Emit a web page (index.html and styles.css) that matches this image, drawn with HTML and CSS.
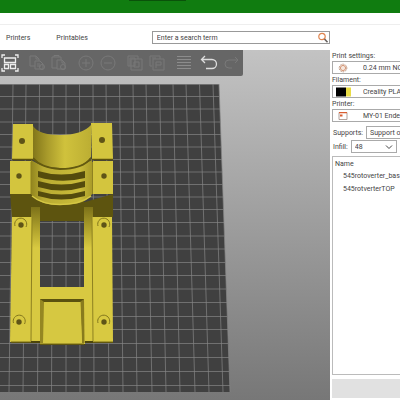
FILE: index.html
```html
<!DOCTYPE html>
<html lang="en">
<head>
    <meta charset="UTF-8">
    <meta name="viewport" content="width=device-width, initial-scale=1.0">
    <title>Slicer</title>
    <link rel="stylesheet" href="styles.css">
</head>
<body>

    <div class="title-bar"><span class="title-tab"></span></div>
    <div class="menu-strip"></div>

    <header class="top-nav">
        <nav class="nav-links">
            <a href="#printers">Printers</a>
            <a href="#printables">Printables</a>
        </nav>
        <form class="search">
            <input type="text" placeholder="Enter a search term" aria-label="Search">
            <button type="button" class="search-btn" aria-label="Search">
                <svg viewBox="0 0 12 12"><circle cx="5" cy="4.5" r="3.2" fill="none" stroke="#e08550" stroke-width="1.2"/><path d="M7.5 7l3 3.2" stroke="#665f5c" stroke-width="1.6"/></svg>
            </button>
        </form>
    </header>

    <main class="workspace">
        <section class="viewport">
            <svg class="scene" viewBox="0 50 330 350" preserveAspectRatio="xMinYMin slice">
                <defs>
                    <linearGradient id="arch" x1="0" x2="1" y1="0" y2="0">
                        <stop offset="0" stop-color="#82761a"/>
                        <stop offset=".25" stop-color="#a99b2b"/>
                        <stop offset=".55" stop-color="#d0c23c"/>
                        <stop offset="1" stop-color="#bcae33"/>
                    </linearGradient>
                    <linearGradient id="band" x1="0" x2="1" y1="0" y2="0">
                        <stop offset="0" stop-color="#92851e"/>
                        <stop offset=".2" stop-color="#b9ab32"/>
                        <stop offset=".8" stop-color="#cabc3a"/>
                        <stop offset="1" stop-color="#a99b29"/>
                    </linearGradient>
                    <linearGradient id="rail" x1="0" x2="0" y1="0" y2="1">
                        <stop offset="0" stop-color="#7c7119"/>
                        <stop offset=".18" stop-color="#b5a72f"/>
                        <stop offset=".3" stop-color="#d8c941"/>
                        <stop offset="1" stop-color="#d8c941"/>
                    </linearGradient>
                </defs>

                <!-- print bed -->
                <path d="M0 84H219L230 392H0z" fill="#404040"/>
                <g fill="none" stroke="#858585" stroke-width=".7">
                    <path d="M13 84L9 392M26 84L23 392M39.500 84L37.500 392M53 84L51.500 392M66 84L66 392M79.500 84L80 392M93 84L94 392M106 84L109 392M119.500 84L123 392M133 84L137 392M146 84L152 392M159.500 84L166 392M173 84L180 392M186 84L195 392M199.500 84L209 392M213 84L223 392M219 84L230 392"/>
                    <path d="M0 84.500H219M0 96.500H219.500M0 109H220M0 122H220M0 134.500H221M0 147H221M0 159.500H222M0 172H222M0 184.500H222.500M0 197H223M0 209.500H223.500M0 222.500H224M0 236H224.500M0 249H225M0 262.500H225.500M0 275.500H226M0 289H226M0 302.500H227M0 316.500H227M0 329.500H228M0 343.500H228M0 357.500H229M0 371.500H229M0 385.500H230"/>
                </g>

                <!-- base part -->
                <path d="M11 339H113V343H85V345H40V343H11z" fill="#4c450b"/>
                <path d="M10 192L31 194L85 202L113 194V217L93 221L92 227L84 221H40L31 221L12 219z" fill="#5d540f"/>
                <path fill-rule="evenodd" d="M31 207H93V341H85V344H40V341H31zM40 221V287H84V221z" fill="url(#rail)"/>
                <path d="M40 200H84V221H40z" fill="#5d540f"/>
                <path d="M12 217H32L31 342H10z" fill="#d8c941"/>
                <path d="M92 217H112L113 342H93z" fill="#d8c941"/>
                <path d="M32 217L31 341M92 217L93 341" stroke="#8e8120" stroke-width="1" fill="none"/>
                <path d="M40 299H84V302H40z" fill="#5b520f"/>
                <path d="M40 299L44 302V343H40z" fill="#958722"/>
                <path d="M84 299L80 302L82 343H84.500z" fill="#887b1d"/>
                <path d="M44 302H80.500L82 343H43z" fill="#d6c841"/>
                <path d="M11 342H31M40 344H84M93 342H113" stroke="#766a17" stroke-width="1.200"/>

                <!-- collar with vents -->
                <path d="M31 160Q60 178 92 160L92 194Q86 205 61 205Q38 205 31 194z" fill="url(#band)"/>
                <path d="M32 196Q42 204.500 60 204.500Q80 204.500 91 196" fill="none" stroke="#d5c744" stroke-width="1.500"/>
                <g fill="#544b0d">
                    <path d="M38 171Q61 178 85 171V178Q61 184 38 177z"/>
                    <path d="M38 181Q61 188 85 181V187Q61 194 38 187z"/>
                    <path d="M38 191Q61 198 85 191V196Q61 203 38 196z"/>
                </g>
                <path d="M10 161L31 161V194H10z" fill="#d3c53e"/>
                <path d="M93 161H113V194H92z" fill="#d3c53e"/>
                <path d="M31 162V194M92.500 162V194" stroke="#8f8220" stroke-width="1"/>

                <!-- top part -->
                <path d="M33 126Q39 135 60 135Q82 135 91 125V157Q83 169 60 168Q41 168 33 158z" fill="url(#arch)"/>
                <path d="M33 158Q41 168 60 169Q83 169 91 158" fill="none" stroke="#63590f" stroke-width="2"/>
                <path d="M13 124H33V159H12z" fill="#d3c53e"/>
                <path d="M91 123H112L113 159H92z" fill="#d3c53e"/>
                <path d="M12 159.500H33M92 159.500H113" stroke="#5c520e" stroke-width="1.500"/>

                <!-- screw holes -->
                <g fill="#5f5417">
                    <circle cx="22" cy="141" r="3"/><circle cx="102" cy="140" r="3"/>
                    <circle cx="19" cy="176" r="2.700"/><circle cx="104" cy="176" r="2.700"/>
                    <circle cx="21" cy="225" r="2.700"/><circle cx="104" cy="225" r="2.700"/>
                    <circle cx="19" cy="322" r="2.700"/><circle cx="104" cy="322" r="2.700"/>
                </g>
                <g fill="none" stroke="#81751c" stroke-width="1">
                    <path d="M15 226a6 6 0 1 1 11 1M98 226a6 6 0 1 1 11 1M13.500 323a6 6 0 1 1 11 1M98 323a6 6 0 1 1 11 1"/>
                </g>
            </svg>

            <div class="toolbar">
                <button class="tool active" aria-label="Arrange"><svg viewBox="0 0 18 18"><path d="M1 4V1h3M14 1h3v3M1 14v3h3M14 17h3v-3M3.500 4h11v4.500h-11zM3.500 10.500h4v4h-4zM9.500 10.500h5v4h-5z"/></svg></button>
                <button class="tool wide" aria-label="Copy"><svg viewBox="0 0 18 18"><path d="M7 12H2V2h6l3 3v2M8 2v3h3M7 7h5l3 3v5H7zM9 10h3M9 12h4"/><circle cx="14" cy="13" r="2.500"/></svg></button>
                <button class="tool" aria-label="Paste"><svg viewBox="0 0 18 18"><path d="M7 14H2V3h9v3M4 3V1.500h5V3M7 6h5l3 3v6H7zM12 6v3h3"/><circle cx="13" cy="13" r="2.500"/></svg></button>
                <button class="tool wide" aria-label="Add instance"><svg viewBox="0 0 18 18"><circle cx="9" cy="9" r="7"/><path d="M9 5v8M5 9h8"/></svg></button>
                <button class="tool" aria-label="Remove instance"><svg viewBox="0 0 18 18"><circle cx="9" cy="9" r="7"/><path d="M5 9h8"/></svg></button>
                <button class="tool wide" aria-label="Split to objects"><svg viewBox="0 0 18 18"><path d="M4 12H2V2h10v3M5 5h11v11H5zM8 8h5v5H8zM4 4h5v8H4z"/></svg></button>
                <button class="tool" aria-label="Split to parts"><svg viewBox="0 0 18 18"><path d="M4 12H2V2h10v3M5 5h11v11H5zM8 14V8h5v3H8M4 4h4"/></svg></button>
                <button class="tool wide layers" aria-label="Variable layer height"><svg viewBox="0 0 18 18"><path d="M2 2.500h14M2 5.500h14M2 8.500h14M2 11.500h14M2 14.500h14"/></svg></button>
                <button class="tool undo" aria-label="Undo"><svg viewBox="0 0 18 18"><path d="M5 2L1.500 5.500L5 9M2 5.500h10a4.500 4.500 0 0 1 0 9H6"/></svg></button>
                <button class="tool" aria-label="Redo"><svg viewBox="0 0 18 18"><path d="M13 3l3 3l-3 3M16 6H7a4 4 0 0 0 0 8h3"/></svg></button>
            </div>
        </section>

        <aside class="sidebar">
            <label for="print-settings">Print settings:</label>
            <div class="combo">
                <svg class="combo-icon" viewBox="0 0 12 10"><circle cx="6" cy="5" r="3.800" fill="none" stroke="#b98b72" stroke-width="1" stroke-dasharray="1.500 .9"/><circle cx="6" cy="5" r="2.600" fill="#f6e7de" stroke="#cf8b68" stroke-width=".9"/></svg>
                <select id="print-settings"><option>0.24 mm NO</option></select>
            </div>

            <label for="filament">Filament:</label>
            <div class="combo">
                <svg class="combo-icon swatch" viewBox="0 0 15 9"><path d="M0 0h10v9H0z" fill="#000"/><path d="M10 0h5v9h-5z" fill="#e9dc45"/></svg>
                <select id="filament"><option>Creality PLA</option></select>
            </div>

            <label for="printer">Printer:</label>
            <div class="combo">
                <svg class="combo-icon" viewBox="0 0 12 10"><path d="M2 1.500h8v7H2z" fill="none" stroke="#a08c84" stroke-width=".8"/><path d="M2 1h8v1.200H2zM3 3.500h2.500v2H3z" fill="#d95f32"/></svg>
                <select id="printer"><option>MY-01 Ende</option></select>
            </div>

            <div class="row">
                <label for="supports">Supports:</label>
                <div class="combo small"><select id="supports"><option>Support o</option></select></div>
            </div>
            <div class="row infill">
                <label for="infill">Infill:</label>
                <div class="combo small closed">
                    <select id="infill"><option>48</option></select>
                    <svg class="chevron" viewBox="0 0 8 6"><path d="M1 1.500l3 3l3-3" fill="none" stroke="#444" stroke-width="1"/></svg>
                </div>
            </div>

            <div class="object-list">
                <h2>Name</h2>
                <ul>
                    <li>545rotoverter_bas</li>
                    <li>545rotverterTOP</li>
                </ul>
            </div>
            <button class="slice-btn" aria-label="Slice now"></button>
        </aside>
    </main>

</body>
</html>
```
FILE: styles.css
```css
* {
    margin: 0;
    padding: 0;
    box-sizing: border-box;
}

body {
    display: flex;
    flex-direction: column;
    height: 100vh;
    overflow: hidden;
    background: #fff;
    color: #444;
    font-family: Roboto, "Noto Sans", sans-serif;
    font-size: 7px;
    line-height: 10px;
}

button, input, select {
    font: inherit;
    color: inherit;
    border: none;
    background: none;
}

.title-bar {
    flex: none;
    height: 13px;
    padding-left: 129px;
    background: #107c10;
}

.title-tab {
    display: block;
    width: 57px;
    height: 1px;
    background: #0a520a;
}

.menu-strip {
    flex: none;
    height: 12px;
    border-bottom: 1px solid #eee;
}

.top-nav {
    flex: none;
    display: flex;
    justify-content: space-between;
    align-items: center;
    height: 25px;
    padding: 0 70px 0 6px;
}

.nav-links {
    display: flex;
    gap: 26px;
}

.nav-links a {
    color: #444;
    text-decoration: none;
}

.search {
    display: flex;
    align-items: center;
    width: 55%;
    height: 13px;
    border: 1px solid #999;
}

.search input {
    flex: 1;
    min-width: 0;
    padding-left: 4px;
    outline: none;
}

.search input::placeholder {
    color: #444;
}

.search-btn {
    width: 12px;
    height: 12px;
}

.search-btn svg {
    display: block;
}

.workspace {
    flex: 1;
    display: flex;
    min-height: 0;
}

.viewport {
    flex: 1;
    position: relative;
    min-width: 0;
    overflow: hidden;
    background: linear-gradient(#c3c3c3, #777);
}

.scene {
    display: block;
    width: 100%;
    height: 100%;
}

/* floats over the scene */
.toolbar {
    position: absolute;
    top: 0;
    left: 0;
    display: flex;
    align-items: center;
    height: 26px;
    padding: 0 3px 0 1px;
    background: #666;
    border-radius: 0 0 2px 0;
}

.tool {
    width: 18px;
    height: 18px;
    margin-right: 4px;
}

.tool:last-child {
    margin-right: 0;
}

.tool.wide {
    margin-left: 5px;
}

.tool svg {
    display: block;
    fill: none;
    stroke: #797979;
    stroke-width: 1;
}

.tool.active svg {
    stroke: #eee;
    stroke-width: 1.3;
}

.tool.layers svg {
    stroke: #8c8c8c;
}

.tool.undo {
    margin-left: 3px;
}

.tool.undo svg {
    stroke: #ddd;
    stroke-width: 1.3;
}

.sidebar {
    flex: 0 0 70px;
    display: flex;
    flex-direction: column;
    padding: 1px 0 2px 2px;
    overflow: hidden;
    white-space: nowrap;
}

.combo {
    flex: none;
    display: flex;
    align-items: center;
    height: 13px;
    margin-bottom: 1px;
    border: 1px solid #aaa;
    border-right: none;
}

.combo-icon {
    flex: none;
    width: 12px;
    height: 10px;
    margin: 0 14px 0 4px;
}

.combo-icon.swatch {
    width: 15px;
    margin: 0 12px 0 3px;
}

.combo select {
    flex: 1;
    min-width: 0;
    appearance: none;
    outline: none;
}

.row {
    display: flex;
    align-items: center;
    gap: 3px;
    padding-left: 1px;
    margin-top: 3px;
}

.row.infill {
    margin-top: 0;
}

.combo.small {
    flex: 1;
    padding-left: 3px;
}

.combo.closed {
    margin-right: 3px;
    border-right: 1px solid #aaa;
}

.chevron {
    width: 8px;
    height: 6px;
    margin-right: 3px;
}

.object-list {
    flex: 1;
    min-height: 0;
    margin: 2px 0 4px;
    padding: 2px 0 0 2px;
    border: 1px solid #bbb;
    border-right: none;
}

.object-list h2 {
    font-size: 7px;
    font-weight: normal;
}

.object-list ul {
    padding-left: 8px;
    list-style: none;
}

.object-list li {
    height: 13px;
    line-height: 14px;
}

.slice-btn {
    flex: none;
    height: 19px;
    background: #e1e1e1;
}
```
